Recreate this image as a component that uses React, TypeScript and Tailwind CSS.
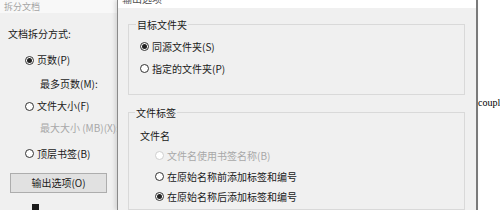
import React from "react";

function Radio({ checked = false, disabled = false }: { checked?: boolean; disabled?: boolean }) {
  return (
    <span
      className={`flex h-[9px] w-[9px] shrink-0 items-center justify-center rounded-full border bg-white ${
        disabled ? "border-[#cfcfcf]" : "border-[#333333]"
      }`}
    >
      {checked && <span className="h-[5px] w-[5px] rounded-full bg-[#222222]" />}
    </span>
  );
}

function RadioRow({
  label,
  checked,
  disabled,
  className = "",
}: {
  label: string;
  checked?: boolean;
  disabled?: boolean;
  className?: string;
}) {
  return (
    <div className={`flex h-[14px] items-center gap-[3px] ${className}`}>
      <Radio checked={checked} disabled={disabled} />
      <span className={disabled ? "text-[#a8a8a8]" : "text-[#1a1a1a]"}>{label}</span>
    </div>
  );
}

export default function App() {
  return (
    <div className="flex h-[210px] w-[500px] overflow-hidden bg-white font-['Noto_Sans_CJK_SC',sans-serif] text-[10px] leading-none text-[#1a1a1a]">
      {/* split document dialog (behind) */}
      <div className="flex w-[117px] shrink-0 flex-col bg-[#f0f0f0]">
        <div className="flex h-[13px] items-center bg-[#f8f8f8] pl-[4px] text-[9px] text-[#a5a5a5]">拆分文档</div>
        <div className="ml-[8px] mt-[14px] flex h-[14px] items-center">文档拆分方式:</div>
        <RadioRow label="页数(P)" checked className="ml-[25px] mt-[13px]" />
        <div className="ml-[40px] mt-[10px] flex h-[14px] items-center">最多页数(M):</div>
        <RadioRow label="文件大小(F)" className="ml-[25px] mt-[9px]" />
        <div className="ml-[40px] mt-[8px] flex h-[14px] items-center whitespace-nowrap text-[#a8a8a8]">
          最大大小 (MB)(X):
        </div>
        <RadioRow label="顶层书签(B)" className="ml-[25px] mt-[12px]" />
        <button
          type="button"
          className="ml-[10px] mt-[12px] h-[21px] w-[97px] border border-[#adadad] bg-[#e1e1e1] text-[10px] text-[#1a1a1a]"
        >
          输出选项(O)
        </button>
        <div className="ml-[32px] mt-[11px] h-[6px] w-[7px] bg-[#1a1a1a]" />
      </div>

      {/* output options dialog (front) */}
      <div className="relative flex w-[361px] shrink-0 flex-col border-l border-r-2 border-l-[#8a8a8a] border-r-[#7a7a7a] bg-[#f0f0f0] shadow-[-2px_0_4px_rgba(0,0,0,0.12)]">
        <div className="h-[9px] overflow-hidden bg-white pl-[4px]">
          <div className="-mt-[6px] text-[#555555]">输出选项</div>
        </div>

        <fieldset className="ml-[10px] mt-[11px] h-[88px] w-[337px] border border-[#d9d9d9] pl-[11px]">
          <legend className="-ml-[4px] px-[1px] leading-[12px]">目标文件夹</legend>
          <RadioRow label="同源文件夹(S)" checked className="mt-[9px]" />
          <RadioRow label="指定的文件夹(P)" className="mt-[8px]" />
        </fieldset>

        <fieldset className="ml-[10px] mt-[12px] h-[120px] w-[337px] border border-[#d9d9d9] pl-[11px]">
          <legend className="-ml-[5px] px-[1px] leading-[12px]">文件标签</legend>
          <div className="mt-[10px] flex h-[14px] items-center">文件名</div>
          <RadioRow label="文件名使用书签名称(B)" disabled className="ml-[15px] mt-[6px]" />
          <RadioRow label="在原始名称前添加标签和编号" className="ml-[15px] mt-[7px]" />
          <RadioRow label="在原始名称后添加标签和编号" checked className="ml-[15px] mt-[6px]" />
        </fieldset>
      </div>

      {/* page behind */}
      <div className="flex-1 bg-white pt-[98px] font-['Liberation_Serif',serif] text-[10px] text-black">
        couple
      </div>
    </div>
  );
}
